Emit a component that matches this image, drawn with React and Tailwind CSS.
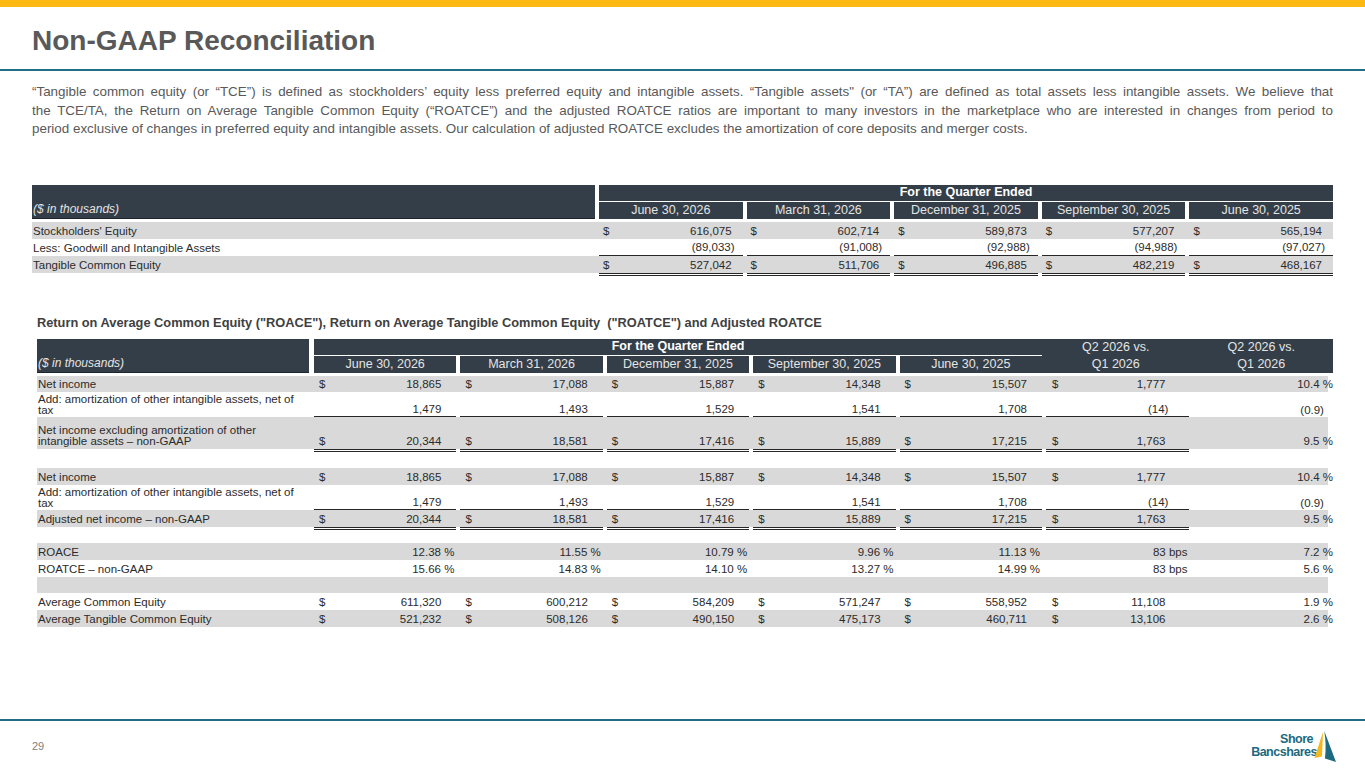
import React from "react";

const DARK = "bg-[#343e48]";
const GRAY = "bg-[#d9d9d9]";
const WHITE = "bg-white";
const LINE = "border-b border-[#262626]";

// column layouts
const T1_COLS = [
  { w: "w-[147.6px]", pl: "pl-[4px]", ipl: "pl-[4px]" },
  { w: "w-[147.6px]", pl: "pl-[4px]", ipl: "pl-[4px]" },
  { w: "w-[147.6px]", pl: "pl-[4px]", ipl: "pl-[4px]" },
  { w: "w-[147.6px]", pl: "pl-[4px]", ipl: "pl-[4px]" },
  { w: "w-[147.6px]", pl: "pl-[4px]", ipl: "pl-[4px]" },
];

const T2_COLS = [
  { w: "w-[147.4px]", pl: "pl-[5px]", ipl: "pl-[5px]" },
  { w: "w-[146.4px]", pl: "pl-[4px]", ipl: "pl-[5px]" },
  { w: "w-[146.4px]", pl: "pl-[4px]", ipl: "pl-[5px]" },
  { w: "w-[146.4px]", pl: "pl-[4px]", ipl: "pl-[5px]" },
  { w: "w-[146.4px]", pl: "pl-[4px]", ipl: "pl-[5px]" },
  { w: "w-[147.5px]", pl: "pl-[4px]", ipl: "pl-[6px]" },
  { w: "w-[143.5px]", pl: "pl-0", ipl: "pl-0" },
];

// cell helpers
const d1 = (v) => ({ d: "$", v, pr: "pr-[11px]" });
const n1 = (v) => ({ d: "", v, pr: v.startsWith("(") ? "pr-[8px]" : "pr-[11px]" });
const d2 = (v) => ({ d: "$", v, pr: "pr-[15px]" });
const n2 = (v) => ({ d: "", v, pr: "pr-[15px]" });
const p2 = (v) => ({ d: "", v: `${v} %`, pr: "pr-[2px]" });
const d6 = (v) => ({ d: "$", v, pr: "pr-[24px]" });
const n6 = (v) => ({ d: "", v, pr: v.startsWith("(") ? "pr-[21px]" : "pr-[24px]" });
const b6 = (v) => ({ d: "", v: `${v} bps`, pr: "pr-[2px]" });
const pc7 = (v) => ({ d: "", v: `${v} %`, pr: "pr-0" });
const ng7 = (v) => ({ d: "", v, pr: "pr-[9px]" });

function Row({ label, cells, cols, labelW, bg, h, pb, line, lineCols = 0, multi }) {
  return (
    <div className={`flex ${bg} ${h}`}>
      <div className={`${labelW} shrink-0 flex items-end ${pb} pl-[1px] ${multi ? "leading-[11px]" : "leading-[12px]"}`}>
        <span>{label}</span>
      </div>
      {cols.map((c, i) => {
        const cell = (cells && cells[i]) || { d: "", v: "", pr: "" };
        return (
          <div key={i} className={`${c.w} ${c.pl} shrink-0 h-full`}>
            <div
              className={`h-full flex items-end justify-between leading-[12px] ${pb} ${c.ipl} ${cell.pr} ${
                line && i < lineCols ? LINE : ""
              }`}
            >
              <span>{cell.d}</span>
              <span className="whitespace-nowrap">{cell.v}</span>
            </div>
          </div>
        );
      })}
    </div>
  );
}

function DoubleRule({ cols, labelW, count, h = "h-[4px]" }) {
  return (
    <div className={`flex ${h} items-start`}>
      <div className={`${labelW} shrink-0`} />
      {cols.map((c, i) => (
        <div key={i} className={`${c.w} ${c.pl} shrink-0`}>
          {i < count && <div className="h-[3px] border-y border-[#262626]" />}
        </div>
      ))}
    </div>
  );
}

const DATES = ["June 30, 2026", "March 31, 2026", "December 31, 2025", "September 30, 2025", "June 30, 2025"];

function Table1() {
  return (
    <div className="mx-[32px] text-[11.5px] text-[#2b2b2b]">
      <div className="flex h-[34px]">
        <div className={`w-[563px] shrink-0 ${DARK} border-b border-[#1d242b] flex items-end pb-[2px] pl-[1px]`}>
          <span className="italic text-[12px] text-[#e4e4e4] leading-[14px]">($ in thousands)</span>
        </div>
        <div className="w-[738px] pl-[4px] flex flex-col">
          <div className={`h-[16px] ${DARK} flex items-center justify-center text-white font-bold text-[12.5px]`}>
            For the Quarter Ended
          </div>
          <div className="h-[1px] bg-white" />
          <div className="h-[17px] flex gap-[4px]">
            {DATES.map((d) => (
              <div key={d} className={`w-[143.6px] ${DARK} flex items-center justify-center text-[12.5px] text-[#e4e4e4]`}>
                {d}
              </div>
            ))}
          </div>
        </div>
      </div>
      <div className="h-[3px]" />
      <Row
        label="Stockholders' Equity"
        cols={T1_COLS}
        labelW="w-[563px]"
        bg={GRAY}
        h="h-[17px]"
        pb="pb-[2px]"
        cells={["616,075", "602,714", "589,873", "577,207", "565,194"].map(d1)}
      />
      <Row
        label="Less: Goodwill and Intangible Assets"
        cols={T1_COLS}
        labelW="w-[563px]"
        bg={WHITE}
        h="h-[17px]"
        pb="pb-[2px]"
        line
        lineCols={5}
        cells={["(89,033)", "(91,008)", "(92,988)", "(94,988)", "(97,027)"].map(n1)}
      />
      <Row
        label="Tangible Common Equity"
        cols={T1_COLS}
        labelW="w-[563px]"
        bg={GRAY}
        h="h-[17px]"
        pb="pb-[2px]"
        cells={["527,042", "511,706", "496,885", "482,219", "468,167"].map(d1)}
      />
      <DoubleRule cols={T1_COLS} labelW="w-[563px]" count={5} />
    </div>
  );
}

function Table2() {
  const L = "w-[272px]";
  const r1 = [d2("18,865"), d2("17,088"), d2("15,887"), d2("14,348"), d2("15,507"), d6("1,777"), pc7("10.4")];
  const r2 = [n2("1,479"), n2("1,493"), n2("1,529"), n2("1,541"), n2("1,708"), n6("(14)"), ng7("(0.9)")];
  const r3 = [d2("20,344"), d2("18,581"), d2("17,416"), d2("15,889"), d2("17,215"), d6("1,763"), pc7("9.5")];
  return (
    <div className="mx-[37px] text-[11.5px] text-[#2b2b2b]">
      <div className="text-[12.8px] font-bold text-[#404040] leading-[16px] whitespace-pre">
        {'Return on Average Common Equity ("ROACE"), Return on Average Tangible Common Equity  ("ROATCE") and Adjusted ROATCE'}
      </div>
      <div className="h-[8px]" />
      <div className="flex h-[34px]">
        <div className={`${L} shrink-0 ${DARK} border-b border-[#1d242b] flex items-end pb-[2px] pl-[1px]`}>
          <span className="italic text-[12px] text-[#e4e4e4] leading-[14px]">($ in thousands)</span>
        </div>
        <div className="w-[5px] shrink-0" />
        <div className="w-[728px] shrink-0 flex flex-col">
          <div className={`h-[16px] ${DARK} flex items-center justify-center text-white font-bold text-[12.5px]`}>
            For the Quarter Ended
          </div>
          <div className="h-[1px] bg-white" />
          <div className="h-[17px] flex gap-[4px]">
            {DATES.map((d) => (
              <div key={d} className={`w-[142.4px] ${DARK} flex items-center justify-center text-[12.5px] text-[#e4e4e4]`}>
                {d}
              </div>
            ))}
          </div>
        </div>
        <div className={`w-[147.5px] shrink-0 ${DARK} flex flex-col text-[12.5px] text-[#e4e4e4]`}>
          <div className="h-[17px] flex items-center justify-center">Q2 2026 vs.</div>
          <div className="h-[17px] flex items-center justify-center">Q1 2026</div>
        </div>
        <div className={`w-[143.5px] shrink-0 ${DARK} flex flex-col text-[12.5px] text-[#e4e4e4]`}>
          <div className="h-[17px] flex items-center justify-center">Q2 2026 vs.</div>
          <div className="h-[17px] flex items-center justify-center">Q1 2026</div>
        </div>
      </div>
      <div className="h-[3px]" />

      <Row label="Net income" cols={T2_COLS} labelW={L} bg={GRAY} h="h-[16px]" pb="pb-[2px]" cells={r1} />
      <Row
        label={
          <>
            Add: amortization of other intangible assets, net of
            <br />
            tax
          </>
        }
        multi
        cols={T2_COLS}
        labelW={L}
        bg={WHITE}
        h="h-[25px]"
        pb="pb-[1px]"
        line
        lineCols={6}
        cells={r2}
      />
      <Row
        label={
          <>
            Net income excluding amortization of other
            <br />
            intangible assets – non-GAAP
          </>
        }
        multi
        cols={T2_COLS}
        labelW={L}
        bg={GRAY}
        h="h-[32px]"
        pb="pb-[2px]"
        cells={r3}
      />
      <DoubleRule cols={T2_COLS} labelW={L} count={6} />
      <div className="h-[15px]" />

      <Row label="Net income" cols={T2_COLS} labelW={L} bg={GRAY} h="h-[17px]" pb="pb-[2px]" cells={r1} />
      <Row
        label={
          <>
            Add: amortization of other intangible assets, net of
            <br />
            tax
          </>
        }
        multi
        cols={T2_COLS}
        labelW={L}
        bg={WHITE}
        h="h-[25px]"
        pb="pb-[1px]"
        line
        lineCols={6}
        cells={r2}
      />
      <Row label="Adjusted net income – non-GAAP" cols={T2_COLS} labelW={L} bg={GRAY} h="h-[17px]" pb="pb-[2px]" cells={r3} />
      <DoubleRule cols={T2_COLS} labelW={L} count={6} h="h-[3px]" />
      <div className="h-[13px]" />

      <Row
        label="ROACE"
        cols={T2_COLS}
        labelW={L}
        bg={GRAY}
        h="h-[17px]"
        pb="pb-[2px]"
        cells={[p2("12.38"), p2("11.55"), p2("10.79"), p2("9.96"), p2("11.13"), b6("83"), pc7("7.2")]}
      />
      <Row
        label="ROATCE – non-GAAP"
        cols={T2_COLS}
        labelW={L}
        bg={WHITE}
        h="h-[17px]"
        pb="pb-[2px]"
        cells={[p2("15.66"), p2("14.83"), p2("14.10"), p2("13.27"), p2("14.99"), b6("83"), pc7("5.6")]}
      />
      <div className={`h-[16px] ${GRAY}`} />
      <Row
        label="Average Common Equity"
        cols={T2_COLS}
        labelW={L}
        bg={WHITE}
        h="h-[17px]"
        pb="pb-[2px]"
        cells={[d2("611,320"), d2("600,212"), d2("584,209"), d2("571,247"), d2("558,952"), d6("11,108"), pc7("1.9")]}
      />
      <Row
        label="Average Tangible Common Equity"
        cols={T2_COLS}
        labelW={L}
        bg={GRAY}
        h="h-[17px]"
        pb="pb-[2px]"
        cells={[d2("521,232"), d2("508,126"), d2("490,150"), d2("475,173"), d2("460,711"), d6("13,106"), pc7("2.6")]}
      />
    </div>
  );
}

function Logo() {
  return (
    <div className="flex items-end">
      <div className="flex flex-col items-end font-bold text-[#1c6a80] text-[12.5px] leading-[12.5px] tracking-[-0.5px]">
        <span className="pr-[4px]">Shore</span>
        <span>Bancshares</span>
      </div>
      <svg width="26" height="33" viewBox="0 0 26 33" className="-ml-[5px] mb-[-5px]">
        <path d="M11 2 L2.5 28 L10 26.5 Z" fill="#f5b81c" />
        <path d="M12.3 1 Q14.5 14 13 28.5 L24 32 Z" fill="#1c6a80" />
      </svg>
    </div>
  );
}

export default function App() {
  return (
    <div className="w-[1365px] h-[768px] bg-white overflow-hidden flex flex-col font-['Liberation_Sans',Arial,Helvetica,sans-serif]">
      <div className="h-[7px] bg-[#fdb913] shrink-0" />
      <div className="px-[32px] pt-[18px]">
        <h1 className="text-[28px] font-bold leading-[32px] text-[#595959]">Non-GAAP Reconciliation</h1>
      </div>
      <div className="h-[12px]" />
      <div className="h-[2px] bg-[#1f6e85] shrink-0" />
      <div className="mx-[32px] mt-[12px] text-[13.4px] leading-[18.5px] text-[#595959]">
        <p className="text-justify [text-align-last:justify]">
          “Tangible common equity (or “TCE”) is defined as stockholders’ equity less preferred equity and intangible
          assets. “Tangible assets" (or “TA”) are defined as total assets less intangible assets. We believe that
        </p>
        <p className="text-justify [text-align-last:justify]">
          the TCE/TA, the Return on Average Tangible Common Equity (“ROATCE”) and the adjusted ROATCE ratios are
          important to many investors in the marketplace who are interested in changes from period to
        </p>
        <p>
          period exclusive of changes in preferred equity and intangible assets. Our calculation of adjusted ROATCE
          excludes the amortization of core deposits and merger costs.
        </p>
      </div>
      <div className="h-[46px]" />
      <Table1 />
      <div className="h-[38px]" />
      <Table2 />
      <div className="mt-auto h-[2px] bg-[#1f6e85] shrink-0" />
      <div className="h-[47px] flex items-start justify-between px-[32px] pr-[27px]">
        <span className="mt-[19px] text-[11px] text-[#7f7f7f] leading-[12px]">29</span>
        <div className="mt-[9px]">
          <Logo />
        </div>
      </div>
    </div>
  );
}
